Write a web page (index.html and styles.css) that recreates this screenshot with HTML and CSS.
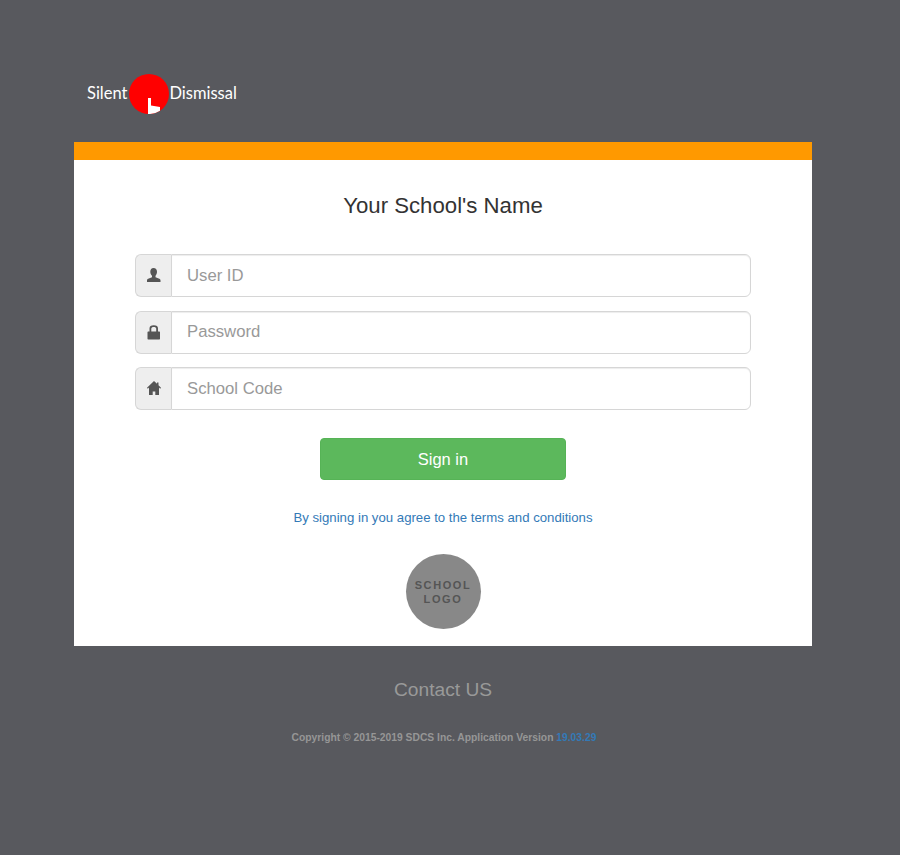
FILE: index.html
```html
<!DOCTYPE html>
<html lang="en">
<head>
    <meta charset="UTF-8">
    <meta name="viewport" content="width=device-width, initial-scale=1.0">
    <title>Silent Dismissal Login</title>
    <link rel="stylesheet" href="styles.css">
</head>
<body>
    <div class="wrapper">
        <div class="brand">
            <span class="brand-word">Silent</span>
            <svg class="brand-mark" width="40" height="40" viewBox="0 0 40 40" aria-hidden="true">
                <circle cx="20" cy="20" r="20" fill="#ff0000"/>
                <path d="M19 24h3v7.500l9 1.500v3.700A20 20 0 0 1 19 40z" fill="#ffffff"/>
            </svg>
            <span class="brand-word">Dismissal</span>
        </div>

        <div class="card">
            <h1>Your School's Name</h1>

            <form class="login-form">
                <div class="input-group">
                    <span class="addon">
                        <svg width="14" height="15" viewBox="0 0 14 15" aria-hidden="true">
                            <path d="M6.500 0C8.700 0 10 1.500 10 3.800c0 1.700-.7 3.200-1.500 4v1.500l3.800 1.400c.9.3 1.200.9 1.200 1.700V14H0v-1.600c0-.8.300-1.400 1.200-1.700L5 9.300V7.800C4 7 3.300 5.500 3.300 3.800 3.300 1.500 4.500 0 6.500 0z"/>
                        </svg>
                    </span>
                    <input type="text" placeholder="User ID">
                </div>
                <div class="input-group">
                    <span class="addon">
                        <svg width="14" height="15" viewBox="0 0 14 15" aria-hidden="true">
                            <path d="M2.500 6.500V3.500C2.500 1.500 4 .3 6.800.3S11 1.500 11 3.500v3h1.300c.5 0 .7.300.7.800v6.400c0 .5-.2.800-.7.800H1.200c-.5 0-.7-.3-.7-.8V7.300c0-.5.200-.8.700-.8zm1.800 0h4.900V3.700c0-1-.9-1.600-2.400-1.600S4.300 2.700 4.300 3.700z"/>
                        </svg>
                    </span>
                    <input type="password" placeholder="Password">
                </div>
                <div class="input-group">
                    <span class="addon">
                        <svg width="14" height="15" viewBox="0 0 14 15" aria-hidden="true">
                            <path d="M7 0l3 2.800V1.500h1.500v2.700L14 6.800l-.8.9-1.200-1.100V14H8.300v-3.500H5.700V14H2V6.600L.8 7.700 0 6.800z"/>
                        </svg>
                    </span>
                    <input type="text" placeholder="School Code">
                </div>
                <button type="button" class="signin">Sign in</button>
            </form>

            <a class="terms" href="#">By signing in you agree to the terms and conditions</a>

            <div class="school-logo">SCHOOL<br>LOGO</div>
        </div>

        <div class="footer">
            <div class="contact">Contact US</div>
            <p class="copyright">Copyright © 2015-2019 SDCS Inc. Application Version <span class="version">19.03.29</span></p>
        </div>
    </div>
</body>
</html>
```

FILE: styles.css
```css
* {
    box-sizing: border-box;
}
body {
    font-family: "Liberation Sans", Arial, sans-serif;
    background-color: #58595e;
    margin: 0;
    padding: 0;
    min-height: 855px;
}
.wrapper {
    width: 738px;
    margin-left: 74px;
}
.brand {
    height: 142px;
    padding: 74px 0 0 13px;
    display: flex;
    align-items: flex-start;
    gap: 2px;
}
.brand-word {
    font-family: Lato, sans-serif;
    font-weight: 400;
    font-size: 16.500px;
    line-height: 38px;
    color: #ffffff;
}
.brand-mark {
    display: block;
    margin-right: -2px;
}
.card {
    background-color: #ffffff;
    border-top: 18px solid #ff9900;
    height: 504px;
    padding: 0 61px;
    text-align: center;
}
h1 {
    margin: 0;
    padding-top: 33px;
    font-size: 22.200px;
    line-height: 26px;
    font-weight: 400;
    color: #333333;
}
.login-form {
    margin-top: 35px;
}
.input-group {
    display: flex;
    height: 43px;
    margin-bottom: 13.500px;
}
.addon {
    width: 36px;
    display: flex;
    align-items: center;
    justify-content: center;
    background-color: #eeeeee;
    border: 1px solid #d6d6d6;
    border-right: 0;
    border-radius: 6px 0 0 6px;
}
.addon svg {
    display: block;
    fill: #555555;
}
.input-group input {
    flex: 1;
    min-width: 0;
    padding: 0 15px;
    font-family: inherit;
    font-size: 16.700px;
    color: #555555;
    background-color: #ffffff;
    border: 1px solid #d6d6d6;
    border-radius: 0 6px 6px 0;
    box-shadow: inset 0 1px 1px rgba(0, 0, 0, 0.075);
}
.input-group input::placeholder {
    color: #999999;
    opacity: 1;
}
.signin {
    display: block;
    width: 246px;
    height: 42px;
    margin: 28px auto 0;
    background-color: #5cb85c;
    border: 1px solid #56b356;
    border-radius: 4px;
    color: #ffffff;
    font-family: inherit;
    font-size: 16.500px;
    cursor: pointer;
}
.terms {
    display: block;
    margin-top: 30px;
    font-size: 13.200px;
    line-height: 15px;
    color: #337ab7;
    text-decoration: none;
}
.school-logo {
    width: 75px;
    height: 75px;
    margin: 29px auto 0;
    padding-top: 24px;
    border-radius: 50%;
    background-color: #888888;
    color: #555555;
    font-size: 11px;
    font-weight: 700;
    line-height: 14px;
    letter-spacing: 1.600px;
}
.footer {
    text-align: center;
}
.contact {
    margin-top: 32px;
    font-size: 19.200px;
    line-height: 24px;
    color: #999999;
}
.copyright {
    margin: 29px 0 0;
    padding-left: 2px;
    font-size: 10.300px;
    line-height: 14px;
    font-weight: 700;
    color: #969696;
}
.version {
    color: #337ab7;
}
```
